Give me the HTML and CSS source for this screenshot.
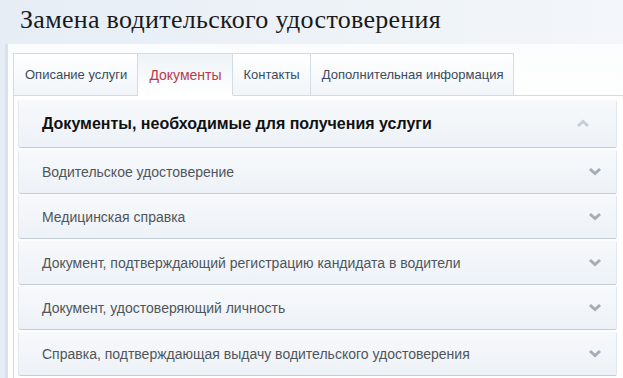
FILE: index.html
```html
<!DOCTYPE html>
<html lang="ru">
<head>
  <meta charset="UTF-8">
  <title>Замена водительского удостоверения</title>
  <link rel="stylesheet" href="styles.css">
</head>
<body>

<div class="page">
  <h1 class="title">Замена водительского удостоверения</h1>
  <div class="panel">
    <div class="tabs">
      <div class="tab">Описание услуги</div>
      <div class="tab active">Документы</div>
      <div class="tab">Контакты</div>
      <div class="tab">Дополнительная информация</div>
    </div>
    <div class="tab-body">
      <div class="item head">
        <span>Документы, необходимые для получения услуги</span>
        <svg class="chev" width="14" height="9" viewBox="0 0 14 9"><path d="M2 7 L7 2.5 L12 7" fill="none" stroke="#c6cdd5" stroke-width="3"/></svg>
      </div>
      <div class="item">
        <span>Водительское удостоверение</span>
        <svg class="chev" width="14" height="9" viewBox="0 0 14 9"><path d="M2 2 L7 6.5 L12 2" fill="none" stroke="#a5adb6" stroke-width="3"/></svg>
      </div>
      <div class="item">
        <span>Медицинская справка</span>
        <svg class="chev" width="14" height="9" viewBox="0 0 14 9"><path d="M2 2 L7 6.5 L12 2" fill="none" stroke="#a5adb6" stroke-width="3"/></svg>
      </div>
      <div class="item">
        <span>Документ, подтверждающий регистрацию кандидата в водители</span>
        <svg class="chev" width="14" height="9" viewBox="0 0 14 9"><path d="M2 2 L7 6.5 L12 2" fill="none" stroke="#a5adb6" stroke-width="3"/></svg>
      </div>
      <div class="item">
        <span>Документ, удостоверяющий личность</span>
        <svg class="chev" width="14" height="9" viewBox="0 0 14 9"><path d="M2 2 L7 6.5 L12 2" fill="none" stroke="#a5adb6" stroke-width="3"/></svg>
      </div>
      <div class="item">
        <span>Справка, подтверждающая выдачу водительского удостоверения</span>
        <svg class="chev" width="14" height="9" viewBox="0 0 14 9"><path d="M2 2 L7 6.5 L12 2" fill="none" stroke="#a5adb6" stroke-width="3"/></svg>
      </div>
    </div>
  </div>
</div>

</body>
</html>
```

FILE: styles.css
```css
body {
  margin: 0;
  padding: 0;
  font-family: "Liberation Sans", Arial, sans-serif;
  background: linear-gradient(to right, #e6edf5, #eef3f8 60%, #f3f6fa);
}
.page {
  display: flex;
  flex-direction: column;
  height: 100vh;
  overflow: hidden;
  padding-top: 5px;
  box-sizing: border-box;
}
.title {
  margin: 0 0 9px 20px;
  font-family: "Liberation Serif", "Times New Roman", serif;
  font-weight: normal;
  font-size: 26px;
  letter-spacing: 0.3px;
  line-height: 30px;
  color: #1a1a1a;
}
.panel {
  flex: 1;
  margin-left: 5px;
  border-left: 3px solid #d6e2ee;
  background: linear-gradient(#fbfcfd, #ffffff 60px);
  padding: 9px 0 0 5px;
  overflow: hidden;
}
.tabs {
  display: flex;
  align-items: flex-end;
}
.tab {
  height: 41px;
  line-height: 42px;
  padding: 0 10px 0 11px;
  font-size: 13px;
  color: #3b4a5c;
  border: 1px solid #d3dbe3;
  border-left: none;
  background: linear-gradient(#ffffff, #f1f5f9);
}
.tab:first-child {
  border-left: 1px solid #d3dbe3;
}
.tab.active {
  font-size: 14px;
  color: #b73a4e;
  background: linear-gradient(#eef3f8, #ffffff);
  border-bottom-color: #fff;
}
.tab-body {
  border-left: 1px solid #d3dbe3;
  border-top: 1px solid #d3dbe3;
  margin-top: -1px;
  padding: 4px 0 0 5px;
  height: 100%;
}
.item {
  display: flex;
  align-items: center;
  justify-content: space-between;
  width: 598px;
  box-sizing: border-box;
  height: 44px;
  padding: 0 14px 0 23px;
  margin-top: 1px;
  font-size: 14px;
  color: #50555b;
  background: linear-gradient(#f7f9fb, #edf2f8);
  border-bottom: 1px solid #c4ccd5;
  border-right: 1px solid #e1e7ee;
  box-shadow: -1px 0 1px #e2e7ee;
  border-radius: 2px;
}
.item:nth-child(even) {
  margin-top: 2px;
}
.item.head {
  height: 48px;
  margin-top: 0;
  padding-right: 26px;
  font-size: 16px;
  font-weight: bold;
  color: #111;
}
.chev {
  display: block;
}
```
